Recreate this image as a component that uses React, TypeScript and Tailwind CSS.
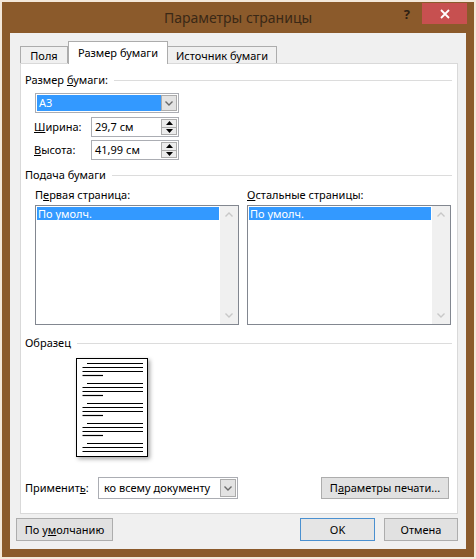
import React from "react";

function Chevron({ up, className }: { up?: boolean; className?: string }) {
  return (
    <svg width="8" height="5" viewBox="0 0 8 5" className={className}>
      <polyline
        points={up ? "0.5,4.5 4,1 7.5,4.5" : "0.5,0.5 4,4 7.5,0.5"}
        fill="none"
        stroke="currentColor"
        strokeWidth="1.4"
      />
    </svg>
  );
}

function Triangle({ up }: { up?: boolean }) {
  return (
    <svg width="7" height="4" viewBox="0 0 7 4">
      <polygon points={up ? "0,4 3.5,0 7,4" : "0,0 3.5,4 7,0"} fill="#000" />
    </svg>
  );
}

function GroupHeader({ children }: { children: React.ReactNode }) {
  return (
    <div className="flex items-center">
      <span>{children}</span>
      <div className="ml-[6px] h-px flex-1 bg-[#dcdcdc]" />
    </div>
  );
}

function DropButton() {
  return (
    <div className="flex w-[16px] items-center justify-center border border-[#acacac] bg-[#e3e3e3] text-[#6b6b6b]">
      <Chevron />
    </div>
  );
}

function SpinInput({ value }: { value: string }) {
  return (
    <div className="flex h-[20px] w-[88px] border border-[#abadb3] bg-white p-px">
      <div className="flex-1 pl-[2px] leading-[16px]">{value}</div>
      <div className="flex w-[16px] flex-col">
        <div className="flex flex-1 items-center justify-center border border-[#acacac] bg-[#ececec]">
          <Triangle up />
        </div>
        <div className="flex flex-1 items-center justify-center border border-t-0 border-[#acacac] bg-[#ececec]">
          <Triangle />
        </div>
      </div>
    </div>
  );
}

function ListBox() {
  return (
    <div className="mt-[2px] flex h-[120px] w-[204px] border border-[#828790] bg-white">
      <div className="flex-1 p-px">
        <div className="h-[13px] bg-[#3399ff] pl-px leading-[13px] text-white">По умолч.</div>
      </div>
      <div className="flex w-[18px] flex-col items-center justify-between bg-[#f0f0f0] py-[6px] text-[#c8c8c8]">
        <Chevron up />
        <Chevron />
      </div>
    </div>
  );
}

function PagePreview() {
  const groups = [0, 1, 2, 3, 4];
  return (
    <svg width="72" height="100" viewBox="0 0 72 100" className="drop-shadow-[2px_2px_2px_rgba(0,0,0,0.35)]">
      <rect x="0.5" y="0.5" width="71" height="98" fill="#fff" stroke="#000" />
      {groups.map((g) => {
        const y = 5.5 + g * 20;
        return (
          <g key={g} stroke="#000" strokeWidth="1.2">
            <line x1="11" x2="67" y1={y} y2={y} />
            <line x1="6.5" x2="67" y1={y + 4} y2={y + 4} />
            <line x1="6.5" x2="67" y1={y + 8} y2={y + 8} />
            {y + 12 < 97 && <line x1="6.5" x2="27" y1={y + 12} y2={y + 12} />}
          </g>
        );
      })}
    </svg>
  );
}

export default function App() {
  return (
    <div className="h-[559px] w-[476px] bg-[#f4e8da] p-[2px] font-['Noto_Sans','Open_Sans',sans-serif] text-[11px] leading-[16px] text-black">
      <div className="flex h-full flex-col bg-[#8b5a2b] px-[8px] pb-[8px]">
        {/* title bar */}
        <div className="grid h-[31px] grid-cols-[1fr_auto_1fr]">
          <div />
          <div className="pt-[6px] text-[14px] leading-[20px] text-[#3a2816]">Параметры страницы</div>
          <div className="flex items-start justify-end">
            <span className="mr-[12px] mt-[4px] text-[13px] font-bold leading-[16px] text-[#2e2013]">?</span>
            <div className="-mr-px mt-px flex h-[21px] w-[45px] items-center justify-center bg-[#c75050]">
              <svg width="10" height="10" viewBox="0 0 10 10">
                <path d="M1 1 L9 9 M9 1 L1 9" stroke="#fff" strokeWidth="1.8" />
              </svg>
            </div>
          </div>
        </div>

        {/* client area */}
        <div className="flex flex-1 flex-col bg-[#f0f0f0] pl-[6px] pr-[8px] pt-[8px]">
          <div className="ml-[4px]">
            {/* tabs */}
            <div className="flex h-[22px] items-end">
              <div className="flex h-[17px] w-[48px] items-center justify-center border border-b-0 border-[#acacac] bg-[#f0f0f0] pt-[2px]">
                Поля
              </div>
              <div className="relative z-10 -mb-px flex h-[23px] w-[100px] items-start justify-center border border-b-0 border-[#acacac] bg-white pt-[3px]">
                Размер бумаги
              </div>
              <div className="flex h-[17px] w-[109px] items-center justify-center border border-b-0 border-l-0 border-[#acacac] bg-[#f0f0f0] pt-[2px]">
                Источник бумаги
              </div>
            </div>

            {/* tab panel */}
            <div className="flex h-[451px] flex-col border border-[#d9d9d9] bg-white pl-[4px] pr-[5px]">
              <div className="mt-[8px]">
                <GroupHeader>
                  Размер <u>б</u>умаги:
                </GroupHeader>
              </div>
              <div className="ml-[10px] mt-[5px] flex h-[20px] w-[144px] border border-[#abadb3] bg-white p-px">
                <div className="flex-1 bg-[#3399ff] pl-[2px] leading-[16px] text-white">A3</div>
                <DropButton />
              </div>
              <div className="ml-[9px] mt-[4px] flex items-center">
                <span className="w-[57px]">
                  <u>Ш</u>ирина:
                </span>
                <SpinInput value="29,7 см" />
              </div>
              <div className="ml-[9px] mt-[3px] flex items-center">
                <span className="w-[57px]">
                  <u>В</u>ысота:
                </span>
                <SpinInput value="41,99 см" />
              </div>

              <div className="mt-[7px]">
                <GroupHeader>Подача бумаги</GroupHeader>
              </div>
              <div className="ml-[10px] mt-[4px] flex gap-[8px]">
                <div>
                  <div>
                    П<u>е</u>рвая страница:
                  </div>
                  <ListBox />
                </div>
                <div>
                  <div>
                    <u>О</u>стальные страницы:
                  </div>
                  <ListBox />
                </div>
              </div>

              <div className="mt-[10px]">
                <GroupHeader>Образец</GroupHeader>
              </div>
              <div className="ml-[51px] mt-[7px]">
                <PagePreview />
              </div>

              <div className="mt-[19px] flex items-center">
                <span className="w-[73px]">
                  Применит<u>ь</u>:
                </span>
                <div className="flex h-[22px] w-[140px] border border-[#abadb3] bg-white p-px">
                  <div className="flex-1 pl-[4px] leading-[18px]">ко всему документу</div>
                  <DropButton />
                </div>
                <button className="ml-auto mr-[3px] h-[22px] w-[128px] border border-[#adadad] bg-[#e1e1e1]">
                  П<u>а</u>раметры печати...
                </button>
              </div>
            </div>
          </div>

          {/* dialog buttons */}
          <div className="mt-[4px] flex">
            <button className="h-[23px] w-[97px] border border-[#adadad] bg-[#e1e1e1]">
              По у<u>м</u>олчанию
            </button>
            <button className="ml-auto h-[23px] w-[75px] border border-[#4a90d0] bg-[#e5e5e5]">OK</button>
            <button className="ml-[9px] h-[23px] w-[74px] border border-[#adadad] bg-[#e1e1e1]">Отмена</button>
          </div>
        </div>
      </div>
    </div>
  );
}
